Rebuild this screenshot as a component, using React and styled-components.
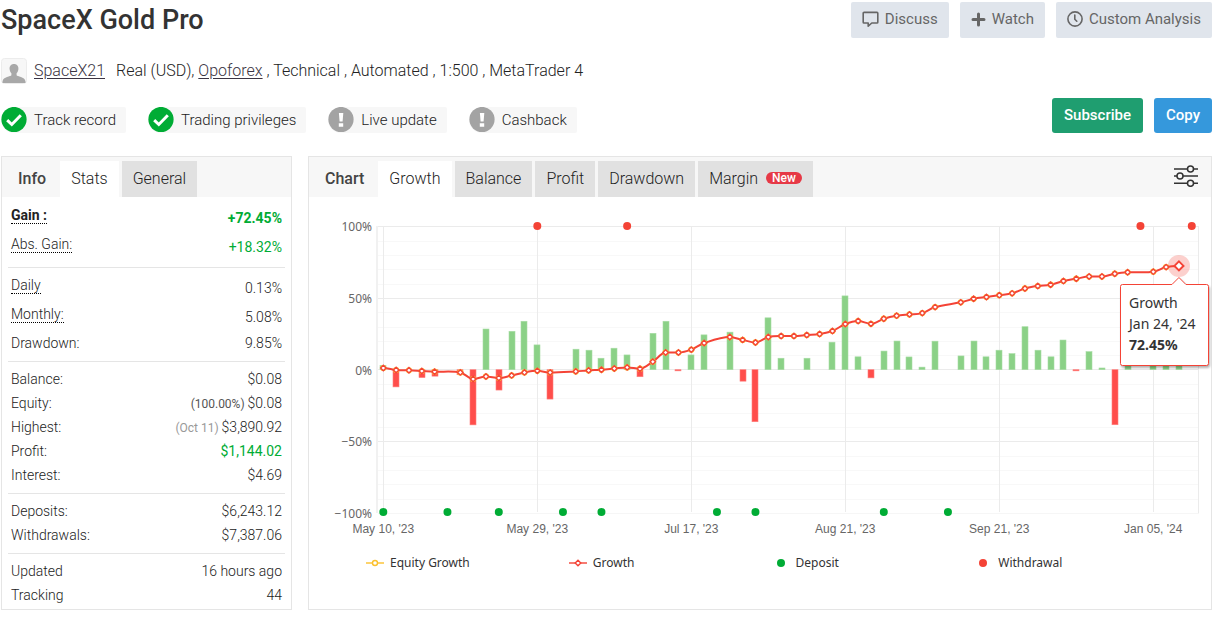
import React from 'react';
import styled, {createGlobalStyle, css} from 'styled-components';

const colors = {
  text: '#333',
  body: '#222',
  muted: '#666',
  faint: '#999',
  green: '#00ac35',
  red: '#f44336',
  yellow: '#fbc02d',
  border: '#e5e5e5',
  panelHead: '#f7f7f7',
  tab: '#e1e1e1',
  toolbar: '#e0e5ec',
};

const GlobalStyle = createGlobalStyle`
    * {
        box-sizing: border-box;
    }
    body {
        margin: 0;
        background: #fff;
        color: ${colors.body};
        font-family: Roboto, "Liberation Sans", sans-serif;
        font-size: 14px;
        font-weight: 300;
    }
    button {
        font-family: inherit;
        font-weight: inherit;
        cursor: pointer;
    }
`;

const Page = styled.main`
    padding: 2px 10px 14px 1px;
`;
const TitleBar = styled.header`
    display: flex;
    align-items: center;
    justify-content: space-between;
`;
const Title = styled.h1`
    margin: 0;
    color: ${colors.text};
    font-size: 27px;
    font-weight: 500;
    line-height: 36px;
`;
const Toolbar = styled.div`
    display: flex;
    gap: 11px;
`;
const ToolButton = styled.button`
    display: flex;
    align-items: center;
    gap: 6px;
    height: 36px;
    padding: 0 11px 2px;
    border: 0;
    border-radius: 2px;
    background: ${colors.toolbar};
    color: ${colors.muted};
    font-size: 15px;
    font-weight: 400;
`;
const Account = styled.div`
    display: flex;
    align-items: center;
    margin-top: 20px;
    font-size: 16px;
    line-height: 26px;
`;
const Avatar = styled.svg`
    width: 26px;
    height: 26px;
    margin-right: 7px;
`;
const AccountLink = styled.a`
    color: #3b3443;
    text-decoration: underline;
    text-underline-offset: 2px;
`;
const AccountInfo = styled.span`
    margin-left: 11px;
`;
const StatusBar = styled.div`
    display: flex;
    align-items: flex-start;
    justify-content: space-between;
    margin-top: 14px;
`;
const Badges = styled.div`
    display: flex;
    gap: 22px;
    padding-top: 9px;
`;
const Badge = styled.span`
    display: flex;
    align-items: center;
    gap: 7px;
    height: 26px;
    padding-right: 10px;
    border-radius: 13px 2px 2px 13px;
    background: ${colors.panelHead};
    font-size: 15px;
`;
const ActionButton = styled.button`
    height: 35px;
    padding: 0 12px 2px;
    border: 0;
    border-radius: 3px;
    background: ${p => p.$color};
    color: #fff;
    font-size: 15px;
    font-weight: 500;
`;
const Columns = styled.div`
    display: grid;
    grid-template-columns: 291px minmax(0, 1fr);
    gap: 16px;
    margin-top: 23px;
`;
const Panel = styled.section`
    border: 1px solid ${colors.border};
`;
const PanelHead = styled.div`
    display: flex;
    align-items: flex-end;
    height: 40px;
    padding-left: 16px;
    background: ${colors.panelHead};
`;
const PanelTitle = styled.h2`
    margin: 0 14px 0 0;
    color: #444;
    font-size: 16px;
    font-weight: 500;
    line-height: 36px;
`;
const Tabs = styled.div`
    display: flex;
    gap: 3px;
`;
const Tab = styled.button`
    display: flex;
    align-items: center;
    gap: 8px;
    height: 36px;
    padding: 0 11px 2px;
    border: 0;
    background: ${p => p.$active ? '#fff' : colors.tab};
    color: ${colors.body};
    font-size: 16px;
`;
const NewPill = styled.span`
    padding: 0 6px;
    border-radius: 6px;
    background: #e63946;
    color: #fff;
    font-size: 12px;
    font-weight: 500;
    line-height: 12px;
`;
const SettingsButton = styled.button`
    display: flex;
    align-items: center;
    height: 40px;
    margin-left: auto;
    padding: 0 13px 2px;
    border: 0;
    background: none;
    color: ${colors.text};
`;
const Stats = styled.div`
    padding: 1px 6px 0;
`;
const StatGroup = styled.dl`
    margin: 0;
    padding: 5px 3px 6px;

    & + & {
        border-top: 1px solid ${colors.border};
    }
    &:last-child {
        padding-bottom: 2px;
    }
`;
const StatRow = styled.div`
    display: flex;
    align-items: center;
    justify-content: space-between;
    height: ${p => p.$hint ? 29 : 24}px;
    font-weight: ${p => p.$bold ? 700 : 'inherit'};
`;
const StatLabel = styled.dt`
    ${p => p.$hint && css`
        margin-bottom: 4px;
        border-bottom: 1px dotted #000;
        line-height: 15px;
    `}
`;
const StatValue = styled.dd`
    margin: 0;
    color: ${p => p.$positive ? colors.green : 'inherit'};
    font-weight: ${p => p.$positive && !p.$bold ? 400 : 'inherit'};
`;
const StatNote = styled.small`
    color: ${p => p.$faint ? colors.faint : '#555'};
    font-size: 12px;
    font-weight: 400;
`;
const ChartSvg = styled.svg`
    display: block;
    width: 100%;
    height: auto;
    overflow: visible;
`;
const YLabel = styled.text`
    fill: ${colors.muted};
    font: 12px "Noto Sans", sans-serif;
    text-anchor: end;
`;
const XLabel = styled.text`
    fill: ${colors.muted};
    font: 12px "Liberation Sans", sans-serif;
    text-anchor: middle;
`;
const TipBox = styled.path`
    fill: #fff;
    stroke: ${colors.red};
    filter: drop-shadow(1px 2px 1px rgba(0, 0, 0, 0.3));
`;
const TipText = styled.text`
    fill: ${colors.text};
    font: ${p => p.$bold ? 700 : 400} 14px "Noto Sans", sans-serif;
`;
const Legend = styled.ul`
    display: grid;
    grid-template-columns: repeat(4, 1fr);
    margin: 0;
    padding: 9px 34px 0 57px;
    list-style: none;
`;
const LegendItem = styled.li`
    display: flex;
    align-items: center;
    gap: 6px;
    color: ${colors.text};
    font: 12px/20px "Noto Sans", sans-serif;
`;

const tools = [
  {
    label: 'Discuss',
    icon: (
      <svg width="17" height="17" viewBox="0 0 17 17" fill="none" stroke="currentColor" strokeWidth="1.6" strokeLinejoin="round">
        <path d="M2 1.4h13a.8.8 0 0 1 .8.8v9a.8.8 0 0 1-.8.8H9.8l-3.6 3.2V12H2a.8.8 0 0 1-.8-.8v-9a.8.8 0 0 1 .8-.8z"/>
      </svg>
    ),
  },
  {
    label: 'Watch',
    icon: (
      <svg width="15" height="15" viewBox="0 0 15 15" fill="none" stroke="currentColor" strokeWidth="3" strokeLinecap="round">
        <path d="M7.5 2v11M2 7.5h11"/>
      </svg>
    ),
  },
  {
    label: 'Custom Analysis',
    icon: (
      <svg width="16" height="16" viewBox="0 0 16 16" fill="none" stroke="currentColor" strokeWidth="1.6" strokeLinecap="round">
        <circle cx="8" cy="8" r="7.1"/>
        <path d="M7.8 4v4.2l2 2"/>
      </svg>
    ),
  },
];

const badges = [
  {label: 'Track record', verified: true},
  {label: 'Trading privileges', verified: true},
  {label: 'Live update'},
  {label: 'Cashback'},
];

const statGroups = [
  [
    {label: 'Gain :', value: '+72.45%', hint: true, bold: true, positive: true},
    {label: 'Abs. Gain:', value: '+18.32%', hint: true, positive: true},
  ],
  [
    {label: 'Daily', value: '0.13%', hint: true},
    {label: 'Monthly:', value: '5.08%', hint: true},
    {label: 'Drawdown:', value: '9.85%'},
  ],
  [
    {label: 'Balance:', value: '$0.08'},
    {label: 'Equity:', value: '$0.08', note: '(100.00%)'},
    {label: 'Highest:', value: '$3,890.92', note: '(Oct 11)', faint: true},
    {label: 'Profit:', value: '$1,144.02', positive: true},
    {label: 'Interest:', value: '$4.69'},
  ],
  [
    {label: 'Deposits:', value: '$6,243.12'},
    {label: 'Withdrawals:', value: '$7,387.06'},
  ],
  [
    {label: 'Updated', value: '16 hours ago'},
    {label: 'Tracking', value: '44'},
  ],
];

// [slot, percent]
const growth = [
  [0, 1.2], [1, -0.2], [2, -0.4], [3, -0.9], [4, -1.4], [6, -1.9], [7, -6.5], [8, -4.7], [9, -5.8],
  [10, -4], [11, -1.9], [12, -0.8], [13, -2], [15, -1.2], [16, -0.5], [17, 0], [18, 0.8], [19, 1.6],
  [20, 0.7], [21, 5.6], [22, 12], [23, 12], [24, 14], [25, 18.6], [27, 22.8], [28, 20.8], [29, 19],
  [30, 22.8], [31, 23.5], [32, 23.5], [33, 24.2], [34, 24.9], [35, 27], [36, 31.9], [37, 34],
  [38, 32], [39, 35.6], [40, 37.7], [41, 38.6], [42, 39.5], [43, 43.7], [45, 47], [46, 49.5],
  [47, 50.7], [48, 52], [49, 53.3], [50, 56.7], [51, 58.4], [52, 59.3], [53, 61.9], [54, 63.5],
  [55, 65], [56, 65], [57, 67], [58, 68], [60, 68.4], [61, 71.6], [62, 72.45],
];
const bars = [
  [0, 3], [1, -12], [3, -5.5], [4, -4.5], [6, -3.5], [7, -38.5], [8, 28.4], [9, -14.2], [10, 26.8],
  [11, 33.8], [12, 17.3], [13, -20.5], [15, 14.3], [16, 13.6], [17, 8], [18, 15], [19, 10.3],
  [20, -4.9], [21, 25.4], [22, 33.8], [23, -0.8], [24, 10.3], [25, 24.3], [27, 26.2], [28, -8],
  [29, -36.3], [30, 36.2], [31, 8], [33, 8], [35, 19.2], [36, 51.5], [37, 9], [38, -5.7], [39, 13],
  [40, 20], [41, 8.9], [42, 1.8], [43, 19.9], [45, 9.6], [46, 20], [47, 9], [48, 13.6], [49, 11.2],
  [50, 30], [51, 13.6], [52, 9], [53, 20.7], [54, -0.8], [55, 12.6], [56, 1.2], [57, -38.4],
  [58, 9], [60, 9], [61, 9], [62, 9],
];
const deposits = [0, 5, 9, 14, 17, 26, 29, 39, 44];
const withdrawals = [12, 19, 59, 63];
const xTicks = [
  [0, "May 10, '23"], [12, "May 29, '23"], [24, "Jul 17, '23"],
  [36, "Aug 21, '23"], [48, "Sep 21, '23"], [60, "Jan 05, '24"],
];
const yTicks = [
  [100, '100%'], [50, '50%'], [0, '0%'], [-50, '−50%'], [-100, '−100%'],
];
const minorTicks = [90, 80, 70, 60, 40, 30, 20, 10, -10, -20, -30, -40, -60, -70, -80, -90];

const PLOT_LEFT = 69;
const PLOT_RIGHT = 890;
const px = slot => 74.3 + slot * 12.833;
const py = value => 172.7 - value * 1.433;

const splinePath = points => {
  const pts = points.map(([slot, value]) => [px(slot), py(value)]);
  const slopes = pts.map(([, y], i) => {
    const prev = pts[i - 1];
    const next = pts[i + 1];
    if (!prev || !next) return 0;
    if ((y - prev[1]) * (next[1] - y) <= 0) return 0;
    return (next[1] - prev[1]) / (next[0] - prev[0]);
  });
  return pts.reduce((d, [x, y], i) => {
    if (i === 0) return `M${x} ${y}`;
    const [x0, y0] = pts[i - 1];
    const third = (x - x0) / 3;
    return `${d}C${x0 + third} ${y0 + slopes[i - 1] * third} ${x - third} ${y - slopes[i] * third} ${x} ${y}`;
  }, '');
};

const diamond = (x, y, r) => `M${x} ${y - r}L${x + r} ${y}L${x} ${y + r}L${x - r} ${y}Z`;

const StatusIcon = ({verified}) => (
  <svg width="26" height="26" viewBox="0 0 26 26" fill="none">
    <circle cx="13" cy="12.5" r="12.6" fill={verified ? colors.green : '#a3a3a3'}/>
    {verified
      ? <path d="M6.2 13.1l4.6 4.4 9-9.2" stroke="#fff" strokeWidth="3"/>
      : <path d="M10.9 6h4.4l-.7 8.6h-3zM10.8 16.2h4.4v3.6h-4.4z" fill="#fff"/>}
  </svg>
);

const GrowthChart = () => {
  const [lastSlot, lastValue] = growth[growth.length - 1];
  const tipX = px(lastSlot);
  return (
    <ChartSvg viewBox="0 0 902 347" role="img" aria-label="Growth chart">
      <g stroke="#f8f8f8">
        {minorTicks.map(v => (
          <path key={v} d={`M${PLOT_LEFT} ${Math.round(py(v)) + 0.5}H${PLOT_RIGHT}`}/>
        ))}
      </g>
      <g stroke="#ebebeb">
        {yTicks.map(([v]) => (
          <path key={v} d={`M${PLOT_LEFT} ${Math.floor(py(v)) + 0.5}H${PLOT_RIGHT}`} opacity={v === -100 ? 0.4 : 1}/>
        ))}
        <path d={`M${PLOT_RIGHT - 0.5} 29V316`}/>
        {xTicks.map(([slot]) => (
          <path key={slot} d={`M${Math.floor(px(slot)) + 0.5} 29V315`}/>
        ))}
      </g>
      <path d={`M${PLOT_LEFT - 1} 29V316`} stroke="#f1f1f1" strokeWidth="2"/>
      {bars.map(([slot, value]) => (
        <rect
          key={slot}
          x={Math.round(px(slot) - 3)}
          y={value > 0 ? py(value) : py(0)}
          width="6"
          height={Math.abs(value) * 1.433}
          fill={value > 0 ? '#8bd187' : '#ff4e4b'}
          stroke={value > 0 ? '#a8dca5' : '#ff7f7d'}
          strokeWidth="0.6"
        />
      ))}
      <path d={splinePath(growth)} fill="none" stroke={colors.red} strokeWidth="2"/>
      {growth.slice(0, -1).map(([slot, value]) => (
        <g key={slot} fill="#fff">
          <circle cx={px(slot)} cy={py(value)} r="2.5" stroke={colors.yellow} strokeWidth="1.2"/>
          <path d={diamond(px(slot), py(value), 2.7)} stroke={colors.red} strokeWidth="1.4"/>
        </g>
      ))}
      <circle cx={tipX} cy={py(lastValue)} r="11" fill={colors.red} opacity="0.25"/>
      <path d={diamond(tipX, py(lastValue), 4.5)} fill="#fff" stroke={colors.red} strokeWidth="2"/>
      {deposits.map(slot => <circle key={slot} cx={px(slot)} cy="315" r="4" fill={colors.green}/>)}
      {withdrawals.map(slot => <circle key={slot} cx={px(slot)} cy="29" r="4" fill={colors.red}/>)}
      {yTicks.map(([v, label]) => <YLabel key={v} x="63" y={Math.round(py(v)) + 5}>{label}</YLabel>)}
      {xTicks.map(([slot, label]) => <XLabel key={slot} x={px(slot)} y="336">{label}</XLabel>)}
      <TipBox d={`M813.5 87.5H${tipX - 7}L${tipX} 80.5L${tipX + 7} 87.5H897.5a2 2 0 0 1 2 2V166.5a2 2 0 0 1 -2 2H813.5a2 2 0 0 1 -2 -2V89.5a2 2 0 0 1 2 -2Z`}/>
      <TipText x="820" y="111">Growth</TipText>
      <TipText x="820" y="132">Jan 24, '24</TipText>
      <TipText x="820" y="153" $bold>72.45%</TipText>
    </ChartSvg>
  );
};

const legend = [
  {
    label: 'Equity Growth',
    mark: <><path d="M0 6h18" stroke={colors.yellow} strokeWidth="1.4"/><circle cx="9" cy="6" r="2.5" fill="#fff" stroke={colors.yellow} strokeWidth="1.4"/></>,
  },
  {
    label: 'Growth',
    mark: <><path d="M0 6h18" stroke={colors.red} strokeWidth="1.4"/><path d={diamond(9, 6, 2.8)} fill="#fff" stroke={colors.red} strokeWidth="1.4"/></>,
  },
  {label: 'Deposit', mark: <circle cx="9" cy="6" r="4" fill={colors.green}/>},
  {label: 'Withdrawal', mark: <circle cx="9" cy="6" r="4" fill={colors.red}/>},
];

const App = () => (
  <>
    <GlobalStyle/>
    <Page>
      <TitleBar>
        <Title>SpaceX Gold Pro</Title>
        <Toolbar>
          {tools.map(({label, icon}) => (
            <ToolButton key={label} type="button">{icon}{label}</ToolButton>
          ))}
        </Toolbar>
      </TitleBar>

      <Account>
        <Avatar viewBox="0 0 26 26">
          <rect x="0.5" y="0.5" width="25" height="25" rx="3" fill="#f7f7f7" stroke="#ececec"/>
          <path d="M13 6c3 0 4.6 2.2 4.4 5-.1 2-.9 3.2-1.8 4.3v1.9c.3 1.3 8.4 1.3 8.9 6.2v1.6h-23v-1.6c.5-4.9 8.6-4.9 8.9-6.2v-1.9c-.9-1.100-1.700-2.300-1.800-4.300C8.400 8.200 10 6 13 6z" fill="#a8a8a8"/>
        </Avatar>
        <AccountLink href="#">SpaceX21</AccountLink>
        <AccountInfo>
          Real (USD), <AccountLink href="#">Opoforex</AccountLink> , Technical , Automated , 1:500 , MetaTrader 4
        </AccountInfo>
      </Account>

      <StatusBar>
        <Badges>
          {badges.map(({label, verified}) => (
            <Badge key={label}><StatusIcon verified={verified}/>{label}</Badge>
          ))}
        </Badges>
        <Toolbar>
          <ActionButton type="button" $color="#1f9e70">Subscribe</ActionButton>
          <ActionButton type="button" $color="#3598dc">Copy</ActionButton>
        </Toolbar>
      </StatusBar>

      <Columns>
        <Panel>
          <PanelHead>
            <PanelTitle>Info</PanelTitle>
            <Tabs>
              <Tab type="button" $active>Stats</Tab>
              <Tab type="button">General</Tab>
            </Tabs>
          </PanelHead>
          <Stats>
            {statGroups.map(rows => (
              <StatGroup key={rows[0].label}>
                {rows.map(({label, value, note, hint, bold, positive, faint}) => (
                  <StatRow key={label} $hint={hint} $bold={bold}>
                    <StatLabel $hint={hint}>{label}</StatLabel>
                    <StatValue $positive={positive} $bold={bold}>
                      {note ? <StatNote $faint={faint}>{note} </StatNote> : null}
                      {value}
                    </StatValue>
                  </StatRow>
                ))}
              </StatGroup>
            ))}
          </Stats>
        </Panel>

        <Panel>
          <PanelHead>
            <PanelTitle>Chart</PanelTitle>
            <Tabs>
              <Tab type="button" $active>Growth</Tab>
              <Tab type="button">Balance</Tab>
              <Tab type="button">Profit</Tab>
              <Tab type="button">Drawdown</Tab>
              <Tab type="button">Margin <NewPill>New</NewPill></Tab>
            </Tabs>
            <SettingsButton type="button" aria-label="Chart settings">
              <svg width="24" height="22" viewBox="0 0 24 22" fill="#f7f7f7" stroke="currentColor" strokeWidth="1.5">
                <path d="M0 4h24M0 11h24M0 18.3h24"/>
                <circle cx="16.5" cy="4" r="3"/>
                <circle cx="6" cy="11" r="3"/>
                <circle cx="16.5" cy="18.3" r="3"/>
              </svg>
            </SettingsButton>
          </PanelHead>
          <GrowthChart/>
          <Legend>
            {legend.map(({label, mark}) => (
              <LegendItem key={label}>
                <svg width="18" height="12" viewBox="0 0 18 12">{mark}</svg>
                {label}
              </LegendItem>
            ))}
          </Legend>
        </Panel>
      </Columns>
    </Page>
  </>
);

export default App;
